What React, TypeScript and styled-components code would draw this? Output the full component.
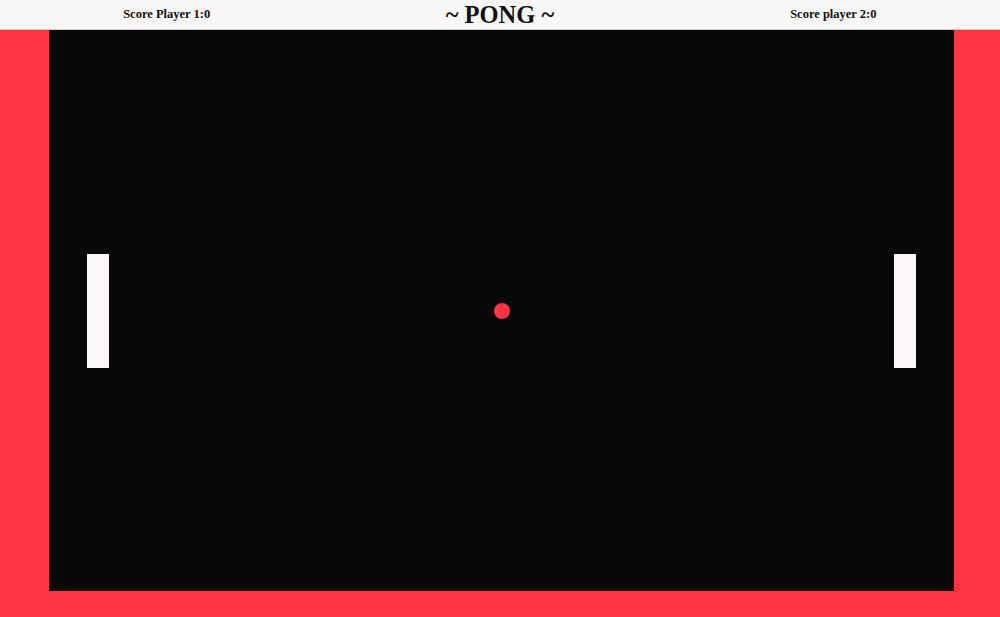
import React from 'react';
import styled, { createGlobalStyle } from 'styled-components';

const colors = {
  red: '#fe3442',
  black: '#080808',
  paper: '#f9f6f6',
  paddle: '#fcf8f8',
  ink: '#111111',
};

const GlobalStyle = createGlobalStyle`
  html, body {
    margin: 0;
    padding: 0;
    background: ${colors.red};
    font-family: 'Liberation Serif', 'Times New Roman', serif;
  }
`;

const Page = styled.div`
  width: 1000px;
  height: 617px;
  display: flex;
  flex-direction: column;
  background: ${colors.red};
  overflow: hidden;
`;

const Header = styled.header`
  height: 29px;
  display: grid;
  grid-template-columns: 1fr 1fr 1fr;
  align-items: center;
  background: ${colors.paper};
  border-bottom: 1px solid #cfcaca;
`;

const Score = styled.div`
  text-align: center;
  font-size: 12.5px;
  font-weight: bold;
  color: ${colors.ink};
`;

const Title = styled.h1`
  margin: 0;
  text-align: center;
  font-size: 24.5px;
  font-weight: bold;
  color: ${colors.ink};
  line-height: 29px;
`;

const Arena = styled.main`
  flex: 1;
  padding: 0 46px 0 49px;
`;

const Board = styled.div`
  width: 905px;
  height: 561px;
  background: ${colors.black};
  display: flex;
  align-items: center;
  justify-content: space-between;
  padding: 0 38px;
  box-sizing: border-box;
`;

const Paddle = styled.div`
  width: 22px;
  height: 114px;
  background: ${colors.paddle};
`;

const Ball = styled.div`
  width: 16px;
  height: 16px;
  border-radius: 50%;
  background: ${colors.red};
`;

function App() {
  return (
    <Page>
      <GlobalStyle />
      <Header>
        <Score>Score Player 1:0</Score>
        <Title>~ PONG ~</Title>
        <Score>Score player 2:0</Score>
      </Header>
      <Arena>
        <Board>
          <Paddle />
          <Ball />
          <Paddle />
        </Board>
      </Arena>
    </Page>
  );
}

export default App;
